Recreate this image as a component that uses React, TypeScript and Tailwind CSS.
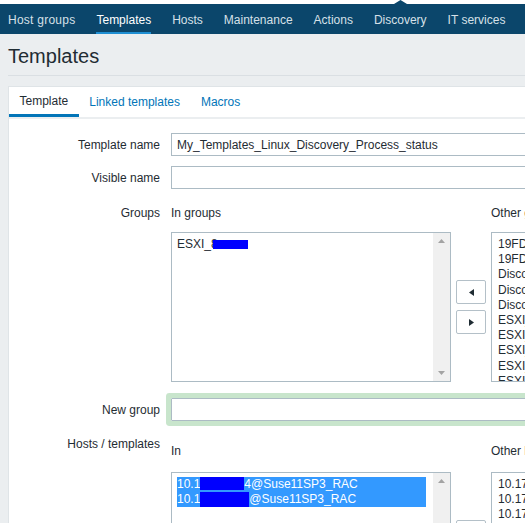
import React from 'react';

const navItems = ['Host groups', 'Templates', 'Hosts', 'Maintenance', 'Actions', 'Discovery', 'IT services'];

const otherGroups = [
  '19FD_Oracle_DB',
  '19FD_Linux_Servers',
  'Discovered hosts',
  'Discovery_ESXi',
  'Discovery_VM',
  'ESXI_10',
  'ESXI_11',
  'ESXI_12',
  'ESXI_13',
  'ESXI_14',
];

const otherHosts = ['10.174.20.31', '10.174.20.32', '10.174.20.33', '10.174.20.34'];

function Scrollbar() {
  return (
    <div className="w-[17px] shrink-0 h-full bg-[#f0f0f0] flex flex-col justify-between items-center py-[6px]">
      <svg width="7" height="4" viewBox="0 0 7 4">
        <polygon points="0,4 3.5,0 7,4" fill="#a3a3a3" />
      </svg>
      <svg width="7" height="4" viewBox="0 0 7 4">
        <polygon points="0,0 7,0 3.5,4" fill="#a3a3a3" />
      </svg>
    </div>
  );
}

function MoveButtons() {
  return (
    <div className="w-[30px] shrink-0 ml-[5px] mr-[5px] flex flex-col justify-center gap-[6px]">
      <button className="h-[24px] w-[30px] border border-[#b4c0c8] rounded-[2px] bg-white flex items-center justify-center">
        <svg width="5" height="7" viewBox="0 0 5 7">
          <polygon points="5,0 5,7 0,3.5" fill="#1f2c33" />
        </svg>
      </button>
      <button className="h-[24px] w-[30px] border border-[#b4c0c8] rounded-[2px] bg-white flex items-center justify-center">
        <svg width="5" height="7" viewBox="0 0 5 7">
          <polygon points="0,0 5,3.5 0,7" fill="#1f2c33" />
        </svg>
      </button>
    </div>
  );
}

function OtherList({ items }: { items: string[] }) {
  return (
    <div className="w-[280px] shrink-0 h-[150px] border border-[#acbbc4] bg-white overflow-hidden pl-[6px] pt-[4px] leading-[15.2px] whitespace-nowrap">
      {items.map((item) => (
        <div key={item}>{item}</div>
      ))}
    </div>
  );
}

export default function App() {
  return (
    <div className="w-[525px] h-[523px] overflow-hidden bg-[#ebeef0] text-[12px] text-[#1f2c33] font-['Liberation_Sans',Arial,sans-serif]">
      {/* top strip with the pointer of the selected main menu */}
      <div className="h-[4px] bg-white relative">
        <svg className="absolute left-[394px] top-0" width="13" height="4" viewBox="0 0 13 4">
          <polygon points="0,4 6.5,0 13,4" fill="#0b466b" />
        </svg>
      </div>

      <nav className="h-[30px] bg-[#0b466b] flex pl-[8px] gap-[21px] whitespace-nowrap">
        {navItems.map((item, i) => (
          <div
            key={item}
            className={`h-full shrink-0 flex items-center pt-[3px] border-b-2 ${
              item === 'Templates' ? 'border-[#1f8fd3] text-white' : 'border-transparent text-[#d6e0e8]'
            } ${i === 0 ? 'tracking-[0.25px]' : ''}`}
          >
            {item}
          </div>
        ))}
      </nav>

      <div className="ml-[8px] h-[42px] border-b border-[#dadfe3] pt-[11px]">
        <h1 className="text-[20px] leading-[23px] text-[#1f2c33]">Templates</h1>
      </div>

      <div className="ml-[8px] mt-[10px] w-[900px] h-[600px] bg-white border border-[#dfe4e7]">
        {/* tabs */}
        <div className="flex border-b-2 border-[#ebeef0]">
          <div className="h-[30px] px-[10.5px] flex items-center border-b-[3px] border-[#0275b8] -mb-[2px] text-[#1f2c33]">
            Template
          </div>
          <div className="h-[30px] px-[10.5px] flex items-center text-[#0275b8]">Linked templates</div>
          <div className="h-[30px] px-[10.5px] flex items-center text-[#0275b8]">Macros</div>
        </div>

        <div className="pt-[14px]">
          {/* Template name */}
          <div className="flex items-center">
            <div className="w-[151px] shrink-0 text-right">Template name</div>
            <div className="ml-[11px] shrink-0 w-[453px] h-[23px] border border-[#acbbc4] px-[5px] flex items-center">
              My_Templates_Linux_Discovery_Process_status
            </div>
          </div>

          {/* Visible name */}
          <div className="flex items-center mt-[10px]">
            <div className="w-[151px] shrink-0 text-right">Visible name</div>
            <div className="ml-[11px] shrink-0 w-[453px] h-[23px] border border-[#acbbc4]" />
          </div>

          {/* Groups */}
          <div className="flex mt-[17px]">
            <div className="w-[151px] shrink-0 text-right leading-[14px]">Groups</div>
            <div className="ml-[11px] shrink-0">
              <div className="flex leading-[14px] whitespace-nowrap">
                <div className="w-[320px] shrink-0">In groups</div>
                <div>Other groups</div>
              </div>
              <div className="flex mt-[12px]">
                <div className="w-[280px] shrink-0 h-[150px] border border-[#acbbc4] flex">
                  <div className="flex-1 pl-[5px] pr-[7px] pt-[4px] leading-[15px] whitespace-nowrap">
                    <div className="flex items-center">
                      ESXI_8
                      <span className="inline-block w-[35px] h-[9px] bg-[#0000ff] -ml-[5px]" />
                    </div>
                  </div>
                  <Scrollbar />
                </div>
                <MoveButtons />
                <OtherList items={otherGroups} />
              </div>
            </div>
          </div>

          {/* New group */}
          <div className="flex items-center mt-[16px]">
            <div className="w-[151px] shrink-0 text-right">New group</div>
            <div className="ml-[11px] shrink-0 w-[453px] h-[23px] border border-[#acbbc4] ring-[5px] ring-[#c8e5cc] rounded-[1px]" />
          </div>

          {/* Hosts / templates */}
          <div className="flex mt-[16px]">
            <div className="w-[151px] shrink-0 text-right leading-[14px]">Hosts / templates</div>
            <div className="ml-[11px] shrink-0 pt-[7px]">
              <div className="flex leading-[14px] whitespace-nowrap">
                <div className="w-[320px] shrink-0">In</div>
                <div>Other hosts</div>
              </div>
              <div className="flex mt-[14px]">
                <div className="w-[280px] shrink-0 h-[150px] border border-[#acbbc4] flex">
                  <div className="flex-1 pl-[5px] pr-[7px] pt-[4px] leading-[15px] whitespace-nowrap">
                    <div className="h-[15px] bg-[#3399ff] text-white flex">
                      <span>10.1</span>
                      <span className="inline-block w-[44px] h-[13px] bg-[#0000ff]" />
                      <span>4@Suse11SP3_RAC</span>
                    </div>
                    <div className="h-[15px] bg-[#3399ff] text-white flex">
                      <span>10.1</span>
                      <span className="inline-block w-[49px] h-[15px] bg-[#0000ff]" />
                      <span>@Suse11SP3_RAC</span>
                    </div>
                  </div>
                  <Scrollbar />
                </div>
                <MoveButtons />
                <OtherList items={otherHosts} />
              </div>
            </div>
          </div>
        </div>
      </div>
    </div>
  );
}
